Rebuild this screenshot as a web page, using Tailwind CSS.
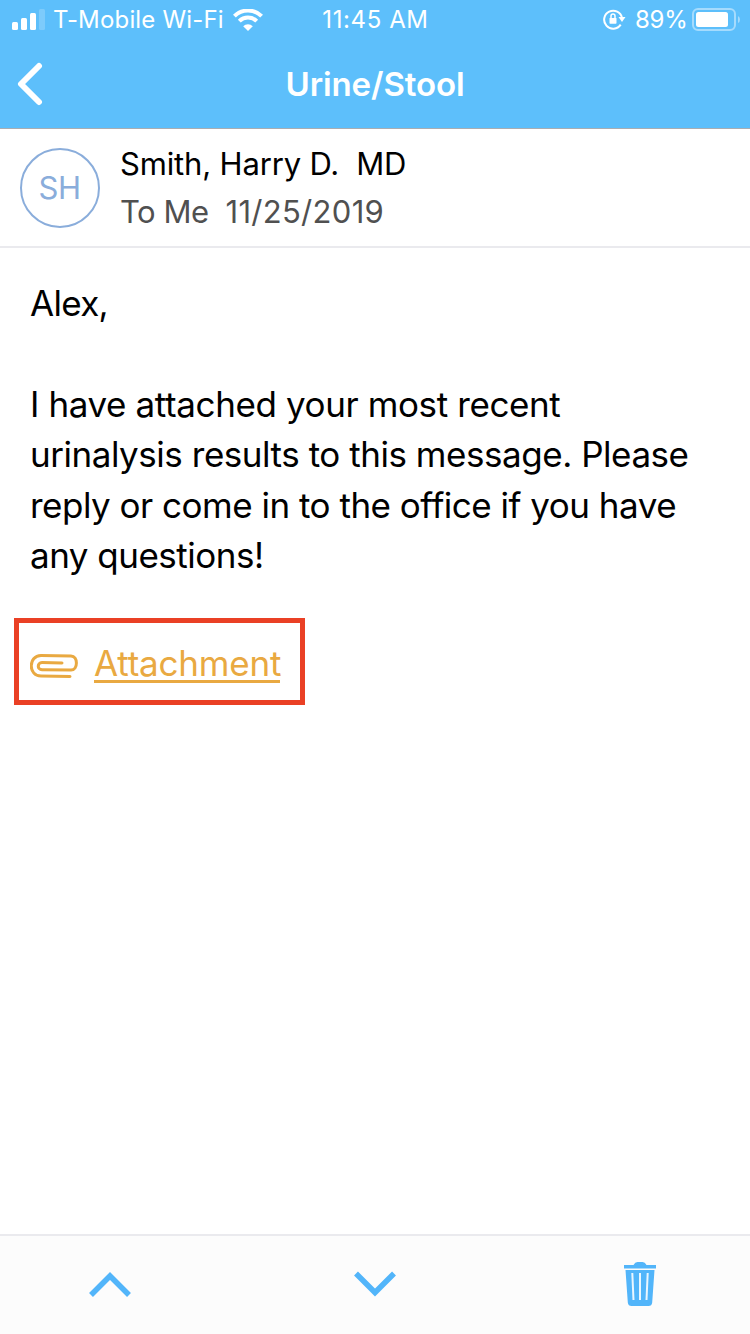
<!DOCTYPE html>
<html lang="en">
<head>
<meta charset="utf-8">
<meta name="viewport" content="width=device-width">
<title>Urine/Stool</title>
<script src="https://cdn.jsdelivr.net/npm/@tailwindcss/browser@4"></script>
</head>
<body class="bg-white font-['Inter','Liberation_Sans',sans-serif]">
<div class="flex h-[1334px] w-[750px] flex-col overflow-hidden whitespace-nowrap">
  <header class="h-[129px] shrink-0 border-b border-[#a9adb2] bg-[#5dbffb] text-white">
    <div class="grid h-10 grid-cols-3 items-center text-[24px] leading-10">
      <div class="flex items-center pl-3">
        <svg class="mr-2 h-[22px] w-[33px] shrink-0" viewBox="0 0 33 22" fill="currentColor"><rect y="13" width="6" height="8" rx="1.5"/><rect x="9" y="9" width="6" height="12" rx="1.5"/><rect x="18" y="4" width="6" height="17" rx="1.5"/><rect x="27" width="6" height="21" rx="1.5" opacity=".2"/></svg>
        <span class="w-[171px] tracking-[0.17px]">T-Mobile Wi-Fi</span>
        <svg class="ml-[9px] h-[22px] w-[30px] shrink-0" viewBox="0 0 30 22" fill="none" stroke="currentColor" stroke-width="4"><path d="M1.4 7.2A19.2 19.2 0 0 1 28.6 7.2M6.3 12.2A12.3 12.3 0 0 1 23.7 12.2"/><path d="M10.2 17.2a6.8 6.8 0 0 1 9.6 0L15 22z" fill="currentColor" stroke="none"/></svg>
      </div>
      <span class="pl-px text-center tracking-[0.6px]">11:45 AM</span>
      <div class="flex items-center justify-end pr-[10px]">
        <svg class="mr-[9px] h-[22px] w-[23px] shrink-0" viewBox="0 0 23 22" fill="none" stroke="currentColor" stroke-width="2"><path d="M17.700 15.600A9 9 0 1 1 19 9"/><path d="M15.500 8H22.500l-3.500 5z" fill="currentColor" stroke="none"/><rect x="6.500" y="8.900" width="7" height="5.800" rx=".7" fill="currentColor" stroke="none"/><path d="M8 9.300V7a2 2 0 0 1 4 0v2.300" stroke-width="1.500"/></svg>
        <span class="w-[52px] tracking-[-0.3px]">89%</span>
        <svg class="ml-[5px] h-6 w-12 shrink-0" viewBox="0 0 48 24"><rect x="1" y="1" width="42" height="21" rx="5" fill="none" stroke="#a5dbfd" stroke-width="2"/><rect x="4" y="4" width="32" height="15" rx="2.5" fill="#fff"/><path d="M46 8q2 1 2 3.500t-2 3.500z" fill="#a5dbfd"/></svg>
      </div>
    </div>
    <div class="grid h-[88px] grid-cols-[100px_1fr_100px] items-center">
      <svg class="ml-[17px] h-[44px] w-[26px]" viewBox="0 0 26 44" fill="none" stroke="currentColor" stroke-width="6" stroke-linecap="round" stroke-linejoin="round"><path d="M22 4 4 22l18 18"/></svg>
      <h1 class="text-center text-[33px] leading-[88px] font-semibold tracking-[-0.1px]">Urine/Stool</h1>
    </div>
  </header>
  <section class="flex h-[119px] shrink-0 items-center border-b-2 border-[#eaeaee] pl-5">
    <div class="flex size-20 items-center justify-center rounded-full border-2 border-[#8aaddb] pt-0.5 pr-px text-[31px] tracking-[-0.5px] text-[#8aaddb]">SH</div>
    <div class="pl-5 text-[31px] leading-[48px]">
      <p class="whitespace-pre tracking-[-0.16px]">Smith, Harry D.  MD</p>
      <p class="flex gap-[17px] text-[#505050]"><span class="tracking-[-0.5px]">To Me</span><span class="tracking-[0.3px]">11/25/2019</span></p>
    </div>
  </section>
  <main class="grow pl-[30px]">
    <div class="pt-[30px] text-[35px] leading-[50.4px]">
      <p class="tracking-[-0.7px]">Alex,</p>
      <p class="pt-[50.6px]"><span class="tracking-[-0.39px]">I have attached your most recent</span><br><span class="tracking-[-0.46px]">urinalysis results to this message. Please</span><br><span class="tracking-[-0.5px]">reply or come in to the office if you have</span><br><span class="tracking-[-0.5px]">any questions!</span></p>
    </div>
    <div class="mt-[37.8px] -ml-4 flex h-[87px] w-[291px] items-center border-5 border-[#ea4025] pl-[11px] text-[#e9a941]">
      <svg class="mt-2 h-6 w-12 shrink-0" viewBox="0 0 48 24" fill="none" stroke="currentColor" stroke-width="3" stroke-linecap="round"><path d="M40 22.400 11 22.100C-2 22-2 1.700 11 1.600L41 1.900c7.200.2 7.200 14 0 14.200L12 15.700c-5 0-5-7.100 0-7.100L32 8.900"/></svg>
      <a class="ml-4 h-[42px] w-[186px] border-b-3 border-[#e9a941] text-[35px] leading-[44px] tracking-[-0.2px]" href="#">Attachment</a>
    </div>
  </main>
  <footer class="flex h-[100px] shrink-0 items-start border-t-2 border-[#eaeaee] bg-[#fcfcfc] text-[#52b5fa]">
    <svg class="mt-[36px] ml-[89px] h-[26px] w-[42px]" viewBox="0 0 42 26" fill="none" stroke="currentColor" stroke-width="5.500"><path d="M2 23 21 4l19 19"/></svg>
    <svg class="mt-[35px] ml-[223px] h-[26px] w-[42px]" viewBox="0 0 42 26" fill="none" stroke="currentColor" stroke-width="5.500"><path d="M2 2.500 21 21.500l19-19"/></svg>
    <svg class="mt-[26px] ml-[228px] h-[44px] w-8" viewBox="0 0 32 44"><path fill="currentColor" d="M0 3h9.500q1.500-3 4-3h5q2.500 0 4 3H32v3.500H0zM1.500 8h29l-2.300 32.500q-.4 3.500-3.700 3.500h-17q-3.300 0-3.700-3.500z"/><path d="M8.300 11 9.500 38M16 11v27M23.700 11 22.500 38" fill="none" stroke="#eaf6ff" stroke-width="2"/></svg>
  </footer>
</div>
</body>
</html>
